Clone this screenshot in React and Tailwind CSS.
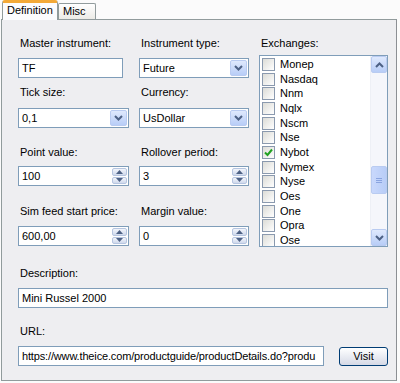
import React from 'react';

const exchanges = [
  { name: 'Monep' },
  { name: 'Nasdaq' },
  { name: 'Nnm' },
  { name: 'Nqlx' },
  { name: 'Nscm' },
  { name: 'Nse' },
  { name: 'Nybot', checked: true },
  { name: 'Nymex' },
  { name: 'Nyse' },
  { name: 'Oes' },
  { name: 'One' },
  { name: 'Opra' },
  { name: 'Ose' },
];

const Label = ({ children, className = '' }) => (
  <div className={`h-[13px] leading-[13px] pl-[2px] text-black ${className}`}>{children}</div>
);

const TextBox = ({ value, className = '' }) => (
  <div className={`h-[20px] border border-[#7f9db9] bg-white px-[3px] leading-[18px] text-black whitespace-nowrap overflow-hidden ${className}`}>
    {value}
  </div>
);

// XP style combo box
const Combo = ({ value, className = '' }) => (
  <div className={`h-[20px] border border-[#7f9db9] bg-white flex items-stretch ${className}`}>
    <div className="flex-1 px-[3px] leading-[18px] text-black">{value}</div>
    <div className="w-[17px] m-[1px] rounded-[2px] border border-[#b9cbf1] bg-gradient-to-b from-[#dfe9fd] to-[#b8cdf7] flex items-center justify-center">
      <svg width="9" height="6" viewBox="0 0 9 6">
        <path d="M1 1 L4.5 4.5 L8 1" fill="none" stroke="#4d6185" strokeWidth="2" />
      </svg>
    </div>
  </div>
);

// numeric up/down
const Spin = ({ value, className = '' }) => (
  <div className={`h-[20px] border border-[#7f9db9] bg-white flex items-stretch ${className}`}>
    <div className="flex-1 px-[3px] leading-[18px] text-black">{value}</div>
    <div className="w-[15px] m-[1px] flex flex-col gap-[1px]">
      <div className="flex-1 rounded-[2px] border border-[#b6c5e0] bg-gradient-to-b from-[#f2f5fb] to-[#cfd9ec] flex items-center justify-center">
        <svg width="7" height="4" viewBox="0 0 7 4"><path d="M0 4 L3.5 0 L7 4 Z" fill="#4d6185" /></svg>
      </div>
      <div className="flex-1 rounded-[2px] border border-[#b6c5e0] bg-gradient-to-b from-[#f2f5fb] to-[#cfd9ec] flex items-center justify-center">
        <svg width="7" height="4" viewBox="0 0 7 4"><path d="M0 0 L3.5 4 L7 0 Z" fill="#4d6185" /></svg>
      </div>
    </div>
  </div>
);

const CheckBox = ({ checked }) => (
  <div className="w-[13px] h-[13px] border border-[#8a99ae] bg-gradient-to-br from-[#dcdcd7] to-white flex items-center justify-center">
    {checked && (
      <svg width="9" height="9" viewBox="0 0 9 9">
        <path d="M1 4.5 L3.5 7 L8 1.5" fill="none" stroke="#21a121" strokeWidth="2" />
      </svg>
    )}
  </div>
);

const ScrollBtn = ({ up }) => (
  <div className="h-[17px] rounded-[2px] border border-[#b9cbf1] bg-gradient-to-b from-[#dfe9fd] to-[#b8cdf7] flex items-center justify-center">
    <svg width="9" height="6" viewBox="0 0 9 6">
      <path d={up ? 'M1 5 L4.5 1.5 L8 5' : 'M1 1 L4.5 4.5 L8 1'} fill="none" stroke="#4d6185" strokeWidth="2" />
    </svg>
  </div>
);

export default function App() {
  return (
    <div
      className="w-[400px] h-[383px] bg-[#fbfbfb] text-[11px] overflow-hidden"
      style={{ fontFamily: '"Liberation Sans", Arial, sans-serif' }}
    >
      {/* Tabs */}
      <div className="h-[20px] flex items-end pl-[2px] relative z-10">
        <div className="h-[20px] w-[56px] bg-[#fcfcfe] border-x border-[#919b9c] border-t-[3px] border-t-[#f3a938] rounded-t-[3px] pl-[4px] leading-[15px] text-black">
          Definition
        </div>
        <div className="h-[16px] w-[38px] mb-[1px] bg-gradient-to-b from-white to-[#ecebe6] border border-b-0 border-[#919b9c] rounded-t-[2px] pl-[4px] leading-[15px] text-black">
          Misc
        </div>
      </div>

      {/* Panel */}
      <div className="ml-[1px] w-[396px] h-[362px] -mt-[1px] border border-[#919b9c] border-r-[#8c8f94] bg-[#eeeef1] pl-[16px] pt-[17px]">
        <div className="flex gap-[10px]">
          {/* left two columns */}
          <div className="flex flex-col w-[231px]">
            <div className="flex gap-[10px]">
              <div className="w-[111px]">
                <Label>Master instrument:</Label>
                <TextBox value="TF" className="mt-[8px] w-[105px]" />
              </div>
              <div className="w-[110px]">
                <Label>Instrument type:</Label>
                <Combo value="Future" className="mt-[8px]" />
              </div>
            </div>
            <div className="flex gap-[10px] mt-[8px]">
              <div className="w-[111px]">
                <Label>Tick size:</Label>
                <Combo value="0,1" className="mt-[9px]" />
              </div>
              <div className="w-[110px]">
                <Label>Currency:</Label>
                <Combo value="UsDollar" className="mt-[9px]" />
              </div>
            </div>
            <div className="flex gap-[10px] mt-[18px]">
              <div className="w-[111px]">
                <Label>Point value:</Label>
                <Spin value="100" className="mt-[7px]" />
              </div>
              <div className="w-[110px]">
                <Label>Rollover period:</Label>
                <Spin value="3" className="mt-[7px]" />
              </div>
            </div>
            <div className="flex gap-[10px] mt-[19px]">
              <div className="w-[111px]">
                <Label>Sim feed start price:</Label>
                <Spin value="600,00" className="mt-[8px]" />
              </div>
              <div className="w-[110px]">
                <Label>Margin value:</Label>
                <Spin value="0" className="mt-[8px]" />
              </div>
            </div>
          </div>

          {/* Exchanges */}
          <div className="w-[129px]">
            <Label>Exchanges:</Label>
            <div className="mt-[5px] h-[192px] border border-[#7f9db9] bg-white flex">
              <div className="flex-1 pt-[1px] pl-[2px] overflow-hidden">
                {exchanges.map((ex) => (
                  <div key={ex.name} className="h-[14.7px] flex items-center gap-[5px] text-black">
                    <CheckBox checked={ex.checked} />
                    <span className="leading-[13px]">{ex.name}</span>
                  </div>
                ))}
              </div>
              <div className="w-[17px] bg-[#f5f6fb] flex flex-col justify-between border-l border-[#eef0f6]">
                <ScrollBtn up />
                <div className="flex-1 relative">
                  <div className="absolute left-0 right-0 top-[93px] h-[28px] rounded-[2px] border border-[#b9cbf1] bg-gradient-to-r from-[#c9d8fc] to-[#b8cdf7] flex flex-col items-center justify-center gap-[1px]">
                    <div className="w-[6px] h-[1px] bg-[#8aa4e0]" />
                    <div className="w-[6px] h-[1px] bg-[#8aa4e0]" />
                    <div className="w-[6px] h-[1px] bg-[#8aa4e0]" />
                  </div>
                </div>
                <ScrollBtn />
              </div>
            </div>
          </div>
        </div>

        {/* Description */}
        <div className="mt-[20px] w-[370px]">
          <Label>Description:</Label>
          <TextBox value="Mini Russel 2000" className="mt-[8px]" />
        </div>

        {/* URL */}
        <div className="mt-[17px] w-[370px]">
          <Label>URL:</Label>
          <div className="mt-[8px] flex items-center">
            <TextBox value="https://www.theice.com/productguide/productDetails.do?produ" className="w-[306px] tracking-[-0.15px]" />
            <div className="ml-[15px] w-[49px] h-[19px] rounded-[3px] border border-[#003c74] bg-gradient-to-b from-white to-[#d5d9e6] text-center leading-[17px] text-black">
              Visit
            </div>
          </div>
        </div>
      </div>
    </div>
  );
}
